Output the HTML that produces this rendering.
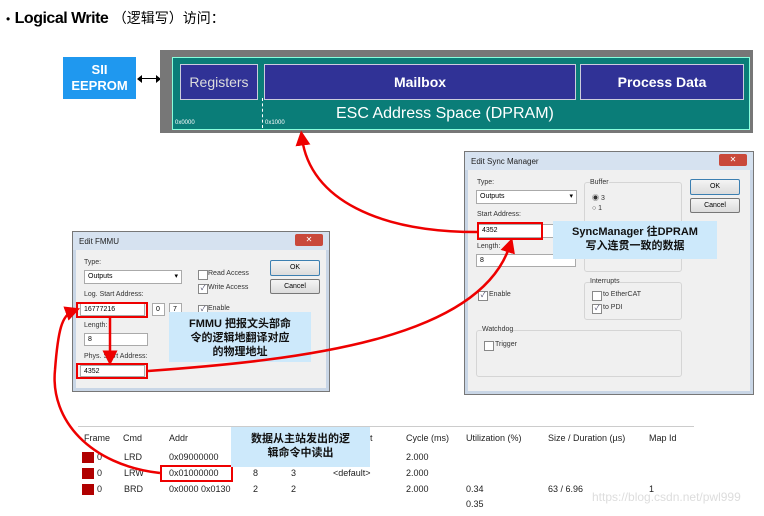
<!DOCTYPE html><html><head><meta charset="utf-8"><style>
body{margin:0;width:764px;height:516px;background:#fff;position:relative;overflow:hidden;font-family:"Liberation Sans","Noto Sans CJK SC",sans-serif}
.a{position:absolute}
.dlg{position:absolute;background:#f0f0f0;border:1px solid #777;box-shadow:0 0 0 3px #c9d6e6 inset}
.tb{position:absolute;left:0;right:0;top:0;height:18px;background:#d6e2f0;font-size:8px;padding:5px 6px 0;box-sizing:border-box;color:#222}
.x{position:absolute;right:6px;top:2px;width:28px;height:12px;background:#c9493b;border-radius:2px;color:#fff;font-size:8px;text-align:center;line-height:12px}
.l{position:absolute;font-size:7px;color:#333}
.f{position:absolute;background:#fff;border:1px solid #aaa;font-size:7px;line-height:12px;padding-left:3px;box-sizing:border-box}
.btn{position:absolute;border:1px solid #777;border-radius:2px;background:linear-gradient(#f4f4f4,#dcdcdc);font-size:7px;text-align:center;line-height:13px}
.cb{position:absolute;width:8px;height:8px;border:1px solid #888;background:#fff;font-size:7px;line-height:8px;text-align:center;color:#335}
.grp{position:absolute;border:1px solid #d5d5d5;border-radius:3px}
.red{position:absolute;border:2.5px solid #e00;box-sizing:border-box}
.call{position:absolute;background:#cde9fb;font-weight:bold;font-size:11px;text-align:center;line-height:14px;color:#111}
.th{position:absolute;top:433px;font-size:9px;color:#222}
.td{position:absolute;font-size:9px;color:#222}
.sq{position:absolute;left:82px;width:12px;height:11px;background:#b00000}
</style></head><body>
<div class="a" style="left:6px;top:8px;font-size:16px"><span style="font-size:12px">•</span> <b style="letter-spacing:-0.5px">Logical Write</b> <span style="font-size:14px">（逻辑写）访问：</span></div>
<div class="a" style="left:63px;top:57px;width:73px;height:42px;background:#1f98ef;color:#fff;font-weight:bold;font-size:13px;text-align:center;line-height:16px;padding-top:5px;box-sizing:border-box">SII<br>EEPROM</div>
<div class="a" style="left:141px;top:78px;width:16px;height:1px;background:#000"></div>
<div class="a" style="left:137px;top:75px;border:4px solid transparent;border-right:5px solid #000;border-left:0"></div>
<div class="a" style="left:156px;top:75px;border:4px solid transparent;border-left:5px solid #000;border-right:0"></div>
<div class="a" style="left:160px;top:50px;width:593px;height:83px;background:#777"></div>
<div class="a" style="left:172px;top:57px;width:576px;height:71px;background:#0a7d78;border:1px solid #8fd"></div>
<div class="a" style="left:180px;top:64px;width:76px;height:34px;background:#303296;border:1px solid #ccd;color:#ddd;font-size:14px;text-align:center;line-height:34px">Registers</div>
<div class="a" style="left:264px;top:64px;width:310px;height:34px;background:#303296;border:1px solid #ccd;color:#fff;font-weight:bold;font-size:14px;text-align:center;line-height:34px">Mailbox</div>
<div class="a" style="left:580px;top:64px;width:162px;height:34px;background:#303296;border:1px solid #ccd;color:#fff;font-weight:bold;font-size:14px;text-align:center;line-height:34px">Process Data</div>
<div class="a" style="left:262px;top:98px;height:30px;border-left:1px dashed #fff"></div>
<div class="a" style="left:336px;top:105px;color:#fff;font-size:16px">ESC Address Space (DPRAM)</div>
<div class="a" style="left:175px;top:120px;color:#fff;font-size:6px">0x0000</div>
<div class="a" style="left:265px;top:120px;color:#fff;font-size:6px">0x1000</div>

<div class="dlg" style="left:464px;top:151px;width:288px;height:242px">
<div class="tb">Edit Sync Manager</div><div class="x">✕</div></div>
<div class="l" style="left:477px;top:179px">Type:</div>
<div class="f" style="left:476px;top:190px;width:101px;height:14px">Outputs<span style="float:right;margin-right:3px">▾</span></div>
<div class="l" style="left:477px;top:211px">Start Address:</div>
<div class="f" style="left:478px;top:224px;width:100px;height:14px">4352</div>
<div class="l" style="left:477px;top:243px">Length:</div>
<div class="f" style="left:476px;top:254px;width:100px;height:13px">8</div>
<div class="cb" style="left:478px;top:291px">✓</div><div class="l" style="left:489px;top:291px">Enable</div>
<div class="grp" style="left:584px;top:182px;width:96px;height:88px"></div>
<div class="l" style="left:590px;top:179px;background:#f0f0f0">Buffer</div>
<div class="l" style="left:592px;top:193px">◉ 3</div><div class="l" style="left:592px;top:205px">○ 1</div>
<div class="btn" style="left:690px;top:179px;width:48px;height:14px;border-color:#3c7fb1">OK</div>
<div class="btn" style="left:690px;top:198px;width:48px;height:13px">Cancel</div>
<div class="grp" style="left:584px;top:282px;width:96px;height:36px"></div>
<div class="l" style="left:590px;top:278px;background:#f0f0f0">Interrupts</div>
<div class="cb" style="left:592px;top:291px"></div><div class="l" style="left:603px;top:291px">to EtherCAT</div>
<div class="cb" style="left:592px;top:304px">✓</div><div class="l" style="left:603px;top:304px">to PDI</div>
<div class="grp" style="left:476px;top:330px;width:204px;height:45px"></div>
<div class="l" style="left:482px;top:326px;background:#f0f0f0">Watchdog</div>
<div class="cb" style="left:484px;top:341px"></div><div class="l" style="left:495px;top:341px">Trigger</div>
<div class="red" style="left:477px;top:222px;width:66px;height:18px"></div>
<div class="call" style="left:553px;top:221px;width:164px;height:38px;padding-top:4px;box-sizing:border-box">SyncManager 往DPRAM<br>写入连贯一致的数据</div>

<div class="dlg" style="left:72px;top:231px;width:256px;height:159px">
<div class="tb">Edit FMMU</div><div class="x">✕</div></div>
<div class="l" style="left:84px;top:259px">Type:</div>
<div class="f" style="left:84px;top:270px;width:98px;height:14px">Outputs<span style="float:right;margin-right:3px">▾</span></div>
<div class="cb" style="left:198px;top:270px"></div><div class="l" style="left:208px;top:270px">Read Access</div>
<div class="cb" style="left:198px;top:284px">✓</div><div class="l" style="left:208px;top:284px">Write Access</div>
<div class="btn" style="left:270px;top:260px;width:48px;height:14px;border-color:#3c7fb1">OK</div>
<div class="btn" style="left:270px;top:279px;width:48px;height:13px">Cancel</div>
<div class="l" style="left:84px;top:291px">Log. Start Address:</div>
<div class="f" style="left:80px;top:303px;width:65px;height:13px">16777216</div>
<div class="f" style="left:152px;top:303px;width:13px;height:13px">0</div>
<div class="f" style="left:169px;top:303px;width:13px;height:13px">7</div>
<div class="cb" style="left:198px;top:305px">✓</div><div class="l" style="left:208px;top:305px">Enable</div>
<div class="l" style="left:84px;top:322px">Length:</div>
<div class="f" style="left:84px;top:333px;width:64px;height:13px">8</div>
<div class="l" style="left:84px;top:353px">Phys. Start Address:</div>
<div class="f" style="left:80px;top:365px;width:65px;height:12px">4352</div>
<div class="red" style="left:76px;top:302px;width:72px;height:16px"></div>
<div class="red" style="left:76px;top:363px;width:72px;height:16px"></div>
<div class="call" style="left:169px;top:312px;width:142px;height:50px;padding-top:5px;box-sizing:border-box">FMMU 把报文头部命<br>令的逻辑地翻译对应<br>的物理地址</div>

<div class="a" style="left:78px;top:426px;width:616px;height:1px;background:#ccc"></div>
<div class="th" style="left:84px">Frame</div><div class="th" style="left:123px">Cmd</div><div class="th" style="left:169px">Addr</div>
<div class="th" style="left:370px">t</div><div class="th" style="left:406px">Cycle (ms)</div><div class="th" style="left:466px">Utilization (%)</div>
<div class="th" style="left:548px">Size / Duration (µs)</div><div class="th" style="left:649px">Map Id</div>
<div class="sq" style="top:452px"></div><div class="sq" style="top:468px"></div><div class="sq" style="top:484px"></div>
<div class="td" style="left:97px;top:452px">0</div><div class="td" style="left:124px;top:452px">LRD</div><div class="td" style="left:169px;top:452px">0x09000000</div><div class="td" style="left:406px;top:452px">2.000</div>
<div class="td" style="left:97px;top:468px">0</div><div class="td" style="left:124px;top:468px">LRW</div><div class="td" style="left:169px;top:468px">0x01000000</div><div class="td" style="left:253px;top:468px">8</div><div class="td" style="left:291px;top:468px">3</div><div class="td" style="left:333px;top:468px">&lt;default&gt;</div><div class="td" style="left:406px;top:468px">2.000</div>
<div class="td" style="left:97px;top:484px">0</div><div class="td" style="left:124px;top:484px">BRD</div><div class="td" style="left:169px;top:484px">0x0000 0x0130</div><div class="td" style="left:253px;top:484px">2</div><div class="td" style="left:291px;top:484px">2</div><div class="td" style="left:406px;top:484px">2.000</div><div class="td" style="left:466px;top:484px">0.34</div><div class="td" style="left:548px;top:484px">63 / 6.96</div><div class="td" style="left:649px;top:484px">1</div>
<div class="td" style="left:466px;top:499px">0.35</div>
<div class="td" style="left:592px;top:490px;font-size:12px;color:#ddd">https://blog.csdn.net/pwl999</div>
<div class="red" style="left:160px;top:465px;width:73px;height:17px"></div>
<div class="call" style="left:231px;top:427px;width:139px;height:40px;padding-top:5px;box-sizing:border-box">数据从主站发出的逻<br>辑命令中读出</div>

<svg class="a" style="left:0;top:0" width="764" height="516">
<defs><marker id="m" markerWidth="6" markerHeight="6" refX="3" refY="3" orient="auto"><path d="M0,0L6,3L0,6Z" fill="#e00"/></marker></defs>
<g fill="none" stroke="#e00" stroke-width="2.5">
<path d="M477,232 C380,232 310,200 302,138" marker-end="url(#m)"/>
<path d="M148,371 C300,360 480,340 510,245" marker-end="url(#m)"/>
<path d="M160,473 C90,465 50,420 55,370 C58,330 62,315 73,311" marker-end="url(#m)"/>
<path d="M110,318 L110,358" marker-end="url(#m)"/>
</g></svg>
</body></html>
